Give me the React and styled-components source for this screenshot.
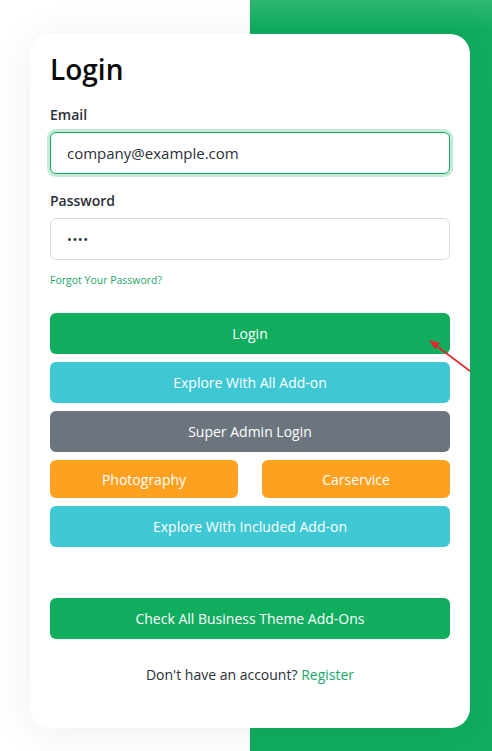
import React from "react";
import styled, { createGlobalStyle } from "styled-components";

const GlobalStyle = createGlobalStyle`
  html, body {
    margin: 0;
    padding: 0;
    font-family: "Open Sans", "Noto Sans", sans-serif;
  }
  * { box-sizing: border-box; }
`;

const App = () => {
  return (
    <Page>
      <GlobalStyle />
      <Card>
        <Title>Login</Title>
        <Field>
          <Label>Email</Label>
          <Input type="email" defaultValue="company@example.com" focused />
        </Field>
        <Field>
          <Label>Password</Label>
          <Input type="password" defaultValue="1234" />
        </Field>
        <Forgot href="#">Forgot Your Password?</Forgot>
        <Buttons>
          <Button color="#10ad5f">Login</Button>
          <Button color="#3fc8d4">Explore With All Add-on</Button>
          <Button color="#6c757d">Super Admin Login</Button>
          <Pair>
            <Button color="#fea020" small>
              Photography
            </Button>
            <Button color="#fea020" small>
              Carservice
            </Button>
          </Pair>
          <Button color="#3fc8d4">Explore With Included Add-on</Button>
        </Buttons>
        <Button color="#10ad5f">Check All Business Theme Add-Ons</Button>
        <Footer>
          Don't have an account? <Register href="#">Register</Register>
        </Footer>
      </Card>
      <Arrow width="50" height="40" viewBox="0 0 50 40">
        <line x1="46" y1="37" x2="10" y2="10" stroke="#e5262b" strokeWidth="1.6" />
        <polygon points="5,6 16,9 11,15" fill="#e5262b" />
      </Arrow>
    </Page>
  );
};

const Page = styled.div`
  position: relative;
  min-height: 751px;
  padding: 34px 22px 24px 30px;
  background: linear-gradient(to bottom, rgba(255, 255, 255, 0.12), rgba(255, 255, 255, 0) 30px),
    linear-gradient(to right, #ffffff 250px, #10ad5f 250px);
`;

const Card = styled.div`
  width: 440px;
  background: #fff;
  border-radius: 20px;
  padding: 18px 20px 44px;
  box-shadow: 0 4px 40px rgba(30, 40, 60, 0.08);
  display: flex;
  flex-direction: column;
`;

const Title = styled.h1`
  margin: 0 0 19px;
  font-size: 28px;
  font-weight: 600;
  line-height: 34px;
  color: #0a0a0a;
`;

const Field = styled.div`
  display: flex;
  flex-direction: column;
  margin-bottom: 17px;
`;

const Label = styled.label`
  font-size: 14px;
  font-weight: 600;
  color: #2b2f36;
  line-height: 20px;
  margin-bottom: 7px;
`;

const Input = styled.input`
  height: 42px;
  width: 100%;
  border: 1px solid ${(p) => (p.focused ? "#1aa86a" : "#d9dbde")};
  border-radius: 6px;
  padding: 0 16px;
  font-family: inherit;
  font-size: 15px;
  color: #2b2f36;
  outline: none;
  box-shadow: ${(p) => (p.focused ? "0 0 0 3px #c3ecd7" : "none")};
  &[type="password"] {
    font-size: 13px;
    letter-spacing: 0.5px;
  }
`;

const Forgot = styled.a`
  margin-top: -4px;
  font-size: 10.5px;
  color: #1aa86a;
  text-decoration: none;
  line-height: 14px;
`;

const Buttons = styled.div`
  margin-top: 26px;
  margin-bottom: 51px;
  display: flex;
  flex-direction: column;
  gap: 8px;
`;

const Pair = styled.div`
  display: grid;
  grid-template-columns: 188px 188px;
  justify-content: space-between;
`;

const Button = styled.button`
  height: ${(p) => (p.small ? "38px" : "41px")};
  width: 100%;
  border: none;
  border-radius: 6px;
  background: ${(p) => p.color};
  color: #fff;
  font-family: inherit;
  font-size: 14px;
  font-weight: 500;
  cursor: pointer;
`;

const Footer = styled.p`
  margin: 26px 0 0;
  text-align: center;
  font-size: 14px;
  color: #2b2f36;
`;

const Register = styled.a`
  color: #1aa86a;
  text-decoration: none;
`;

const Arrow = styled.svg`
  position: absolute;
  left: 424px;
  top: 334px;
`;

export default App;
